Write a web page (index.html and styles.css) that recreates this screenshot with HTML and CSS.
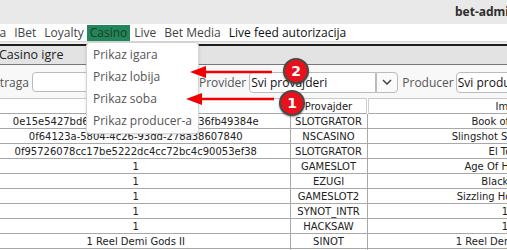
FILE: index.html
```html
<!DOCTYPE html>
<html lang="sr">
<head>
    <meta charset="UTF-8">
    <title>bet-admin</title>
    <link rel="stylesheet" href="styles.css">
</head>
<body>
    <div class="window">
        <div class="titlebar">bet-admin</div>

        <div class="menubar">
            <span class="menu-item first">Sistema</span>
            <span class="menu-item">IBet</span>
            <span class="menu-item">Loyalty</span>
            <span class="menu-item active">Casino</span>
            <span class="menu-item">Live</span>
            <span class="menu-item">Bet Media</span>
            <span class="menu-item strong">Live feed autorizacija</span>
        </div>

        <div class="spacer"></div>

        <div class="tabbar">
            <span class="tab">Casino igre</span>
        </div>

        <div class="filters">
            <span class="label first-label">Pretraga</span>
            <input type="text" class="search-input">
            <span class="label">Provider</span>
            <div class="combo">
                <span class="combo-value">Svi provajderi</span>
            </div>
            <div class="combo-btn">
                <svg width="10" height="6" viewBox="0 0 10 6"><path d="M1 1 L5 5 L9 1" fill="none" stroke="#444" stroke-width="1.5"/></svg>
            </div>
            <span class="label">Producer</span>
            <div class="combo wide">
                <span class="combo-value">Svi produceri</span>
            </div>
        </div>

        <table class="games">
            <thead>
                <tr>
                    <th class="c1">ID</th>
                    <th class="c2">Provajder</th>
                    <th class="c3">Ime</th>
                </tr>
            </thead>
            <tbody>
                <tr><td>0e15e5427bd6a8c0d2f71e9b45c0d136fb49384e</td><td>SLOTGRATOR</td><td>Book of Dead</td></tr>
                <tr><td>0f64123a-5804-4c26-93dd-278a38607840</td><td>NSCASINO</td><td>Slingshot Six Shooter</td></tr>
                <tr><td>0f95726078cc17be5222dc4cc72bc4c90053ef38</td><td>SLOTGRATOR</td><td>El Toro</td></tr>
                <tr><td>1</td><td>GAMESLOT</td><td>Age Of Heroes II</td></tr>
                <tr><td>1</td><td>EZUGI</td><td>Blackjack</td></tr>
                <tr><td>1</td><td>GAMESLOT2</td><td>Sizzling Hot Deluxe</td></tr>
                <tr><td>1</td><td>SYNOT_INTR</td><td>1</td></tr>
                <tr><td>1</td><td>HACKSAW</td><td>1</td></tr>
                <tr><td>1 Reel Demi Gods II</td><td>SINOT</td><td>1 Reel Demi Gods II</td></tr>
                <tr><td>&nbsp;</td><td>&nbsp;</td><td>&nbsp;</td></tr>
            </tbody>
        </table>

        <!-- Padajuci meni Casino -->
        <ul class="dropdown">
            <li>Prikaz igara</li>
            <li>Prikaz lobija</li>
            <li>Prikaz soba</li>
            <li>Prikaz producer-a</li>
        </ul>

        <!-- Oznake -->
        <svg class="arrows" width="507" height="250" viewBox="0 0 507 250">
            <line x1="272" y1="72" x2="204" y2="72" stroke="#f00000" stroke-width="2.5"/>
            <polygon points="190,72 206,66 206,78" fill="#f00000"/>
            <line x1="274" y1="99" x2="200" y2="99" stroke="#f00000" stroke-width="2.5"/>
            <polygon points="186,99 202,93 202,105" fill="#f00000"/>
        </svg>
        <span class="badge badge-2">2</span>
        <span class="badge badge-1">1</span>
    </div>
</body>
</html>
```

FILE: styles.css
```css
* {
    margin: 0;
    padding: 0;
    box-sizing: border-box;
}

body {
    font-family: "Open Sans", sans-serif;
    background-color: #ffffff;
    color: #333;
    overflow: hidden;
}

.window {
    position: relative;
    width: 507px;
    height: 250px;
    overflow: hidden;
    background-color: #f6f6f6;
}

.titlebar {
    height: 24px;
    background-color: #e9e9e9;
    font-family: "Noto Sans", sans-serif;
    font-weight: bold;
    font-size: 12px;
    line-height: 23px;
    padding-left: 455px;
    white-space: nowrap;
    color: #2e2e2e;
}

.menubar {
    height: 18px;
    background-color: #fff;
    border-bottom: 1px solid #d6d6d6;
    display: flex;
    white-space: nowrap;
    font-size: 12px;
    line-height: 16px;
    color: #444;
}

.menu-item {
    padding: 0 4px;
    margin-top: 1px;
    height: 16px;
    flex-shrink: 0;
}

.menu-item.first {
    margin-left: -42px;
}

.menu-item.active {
    background-color: #23865a;
    color: #1c3a2c;
    padding: 0 3px 0 3px;
    margin-left: -1px;
}

.menu-item.strong {
    color: #111;
}

.spacer {
    height: 4px;
    background-color: #ececec;
    border-bottom: 2px solid #1e1e1e;
}

.tabbar {
    height: 19px;
    background-color: #e3e3e3;
    border-bottom: 1px solid #777;
    font-size: 12.5px;
    line-height: 18px;
    color: #222;
}

.tab {
    margin-left: -1px;
}

.filters {
    height: 33px;
    display: flex;
    align-items: center;
    white-space: nowrap;
    font-size: 12px;
    color: #555;
    background-color: #f8f8f8;
    padding-top: 1px;
}

.filters > * {
    flex-shrink: 0;
}

.label.first-label {
    margin-left: -19px;
}

.search-input {
    width: 160px;
    height: 20px;
    margin: 0 7px 0 3px;
    border: 1px solid #bbb;
    border-radius: 4px;
    background-color: #fff;
}

.combo {
    width: 127px;
    height: 21px;
    margin-left: 3px;
    border: 1px solid #bbb;
    border-radius: 4px 0 0 4px;
    background-color: #fff;
    color: #111;
    line-height: 19px;
    overflow: hidden;
}

.combo.wide {
    width: 80px;
    border-radius: 4px;
    margin-left: 2px;
}

.combo-value {
    padding-left: 1px;
}

.combo-btn {
    width: 22px;
    height: 21px;
    border: 1px solid #bbb;
    border-radius: 0 4px 4px 0;
    background-color: #fafafa;
    display: flex;
    align-items: center;
    justify-content: center;
    margin-right: 4px;
}

table.games {
    border-collapse: collapse;
    margin-left: -18px;
    width: 661px;
    table-layout: fixed;
    font-family: "DejaVu Sans", sans-serif;
    font-size: 10px;
    color: #222;
    background-color: #fff;
}

table.games th, table.games td {
    height: 15px;
    padding: 0;
    text-align: center;
    white-space: nowrap;
    overflow: hidden;
    border-bottom: 1px solid #a8a8a8;
    border-right: 1px solid #a8a8a8;
    line-height: 13px;
}

table.games th {
    font-weight: normal;
    border-top: 1px solid #c8c8c8;
    border-right: 3px double #cfcfcf;
}

.c1 { width: 308px; }
.c2 { width: 77px; }
.c3 { width: 276px; }

.dropdown {
    position: absolute;
    left: 86px;
    top: 42px;
    width: 113px;
    padding: 1px 0;
    list-style-type: none;
    background-color: #fff;
    border: 1px solid #d4d4d4;
    border-radius: 4px;
    box-shadow: 0 1px 3px rgba(0, 0, 0, 0.15);
    font-size: 12px;
    color: #555;
}

.dropdown li {
    height: 22px;
    line-height: 22px;
    padding-left: 6px;
    white-space: nowrap;
}

.arrows {
    position: absolute;
    left: 0;
    top: 0;
}

.badge {
    position: absolute;
    width: 26px;
    height: 26px;
    border-radius: 50%;
    background-color: #e8101a;
    border: 2px solid #4a4a4a;
    color: #fff;
    font-family: "DejaVu Sans", sans-serif;
    font-weight: bold;
    font-size: 14px;
    line-height: 22px;
    text-align: center;
    box-shadow: 0 1px 2px rgba(0, 0, 0, 0.4);
}

.badge-2 {
    left: 283px;
    top: 58px;
}

.badge-1 {
    left: 279px;
    top: 90px;
}
```
